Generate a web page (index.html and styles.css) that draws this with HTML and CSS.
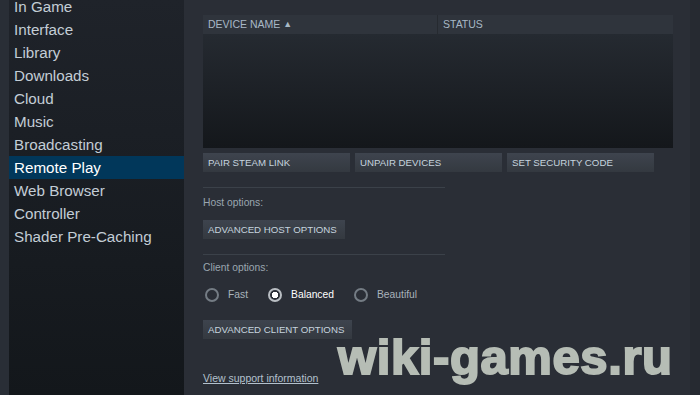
FILE: index.html
```html
<!DOCTYPE html>
<html lang="en">
<head>
  <meta charset="UTF-8" />
  <title>Settings - Remote Play</title>
  <link rel="stylesheet" href="styles.css">
</head>
<body>
  <div class="edge"></div>
  <ul class="sidebar">
    <li>In Game</li>
    <li>Interface</li>
    <li>Library</li>
    <li>Downloads</li>
    <li>Cloud</li>
    <li>Music</li>
    <li>Broadcasting</li>
    <li class="active">Remote Play</li>
    <li>Web Browser</li>
    <li>Controller</li>
    <li>Shader Pre-Caching</li>
  </ul>
  <div class="main">
    <div class="devices">
      <div class="devices-head">
        <div class="col col-name">Device name <span class="sort">&#9650;</span></div>
        <div class="col col-status">Status</div>
      </div>
      <div class="devices-body"></div>
    </div>
    <div class="button-row">
      <button class="btn btn-fixed">Pair Steam Link</button>
      <button class="btn btn-fixed">Unpair devices</button>
      <button class="btn btn-fixed">Set security code</button>
    </div>
    <div class="divider"></div>
    <div class="label">Host options:</div>
    <button class="btn btn-host">Advanced host options</button>
    <div class="divider divider-client"></div>
    <div class="label">Client options:</div>
    <div class="radios">
      <label class="radio"><span class="dot"></span>Fast</label>
      <label class="radio checked"><span class="dot"></span>Balanced</label>
      <label class="radio"><span class="dot"></span>Beautiful</label>
    </div>
    <button class="btn btn-client">Advanced client options</button>
    <a class="support" href="#">View support information</a>
    <div class="watermark">wiki-games.ru</div>
  </div>
  <div class="edge-right"></div>
</body>
</html>
```

FILE: styles.css
```css
body {
  margin: 0;
  height: 395px;
  overflow: hidden;
  display: flex;
  background: #2a2e36;
  font-family: 'Liberation Sans', Arial, sans-serif;
  color: #c6d4df;
}
.edge {
  width: 9px;
  background: #292e36;
}
.sidebar {
  width: 175px;
  margin: 0;
  padding: 0;
  list-style: none;
  background: linear-gradient(180deg, #1f232a, #13171b);
}
.sidebar li {
  height: 23px;
  line-height: 23px;
  padding-left: 5px;
  font-size: 15.2px;
  color: #c3cdd6;
}
.sidebar li:first-child {
  margin-top: -5px;
}
.sidebar li.active {
  background: #01375a;
  color: #fff;
}
.main {
  position: relative;
  flex: 1;
  padding: 15px 0 0 19px;
}
.devices {
  width: 470px;
}
.devices-head {
  display: flex;
  height: 19px;
  background: #2f343c;
}
.col {
  font-size: 10.5px;
  line-height: 19px;
  text-transform: uppercase;
  color: #a8b8c6;
}
.col-name {
  width: 229px;
  padding-left: 5px;
  border-right: 1px solid #262a30;
}
.col-status {
  padding-left: 5px;
}
.sort {
  font-size: 9px;
  vertical-align: 1px;
}
.devices-body {
  height: 114px;
  background: linear-gradient(180deg, #252a31, #14171b);
}
.button-row {
  display: flex;
  gap: 5px;
  margin-top: 5px;
}
.btn {
  display: block;
  height: 19px;
  padding: 0 8px 0 5px;
  border: none;
  background: linear-gradient(180deg, #3e444e, #343940);
  font-family: inherit;
  font-size: 9.7px;
  text-align: left;
  text-transform: uppercase;
  white-space: nowrap;
  color: #c6d4df;
  cursor: pointer;
}
.btn-fixed {
  width: 147px;
}
.btn-client {
  margin-top: 18px;
}
.btn-host {
  margin-top: 10px;
}
.divider {
  width: 242px;
  height: 1px;
  margin-top: 15px;
  background: #3b4149;
}
.label {
  margin-top: 8px;
  font-size: 10.3px;
  line-height: 14px;
  color: #9aa6b0;
}
.divider-client + .label {
  margin-top: 6px;
}
.radios {
  display: flex;
  margin-top: 13px;
  padding-left: 2px;
}
.radio {
  display: flex;
  align-items: center;
  margin-right: 20px;
  font-size: 10.3px;
  line-height: 14px;
  color: #a9b3bb;
}
.dot {
  box-sizing: border-box;
  width: 14px;
  height: 14px;
  margin-right: 9px;
  border: 2px solid #747c84;
  border-radius: 50%;
}
.radio.checked {
  color: #fff;
}
.radio.checked .dot {
  border-color: #b9bec3;
  background: radial-gradient(circle, #fff 0 3px, transparent 3.5px);
}
.support {
  display: inline-block;
  margin-top: 32px;
  font-size: 10.5px;
  line-height: 14px;
  color: #b3c1cd;
}
.watermark {
  position: absolute;
  left: 154px;
  top: 329px;
  font-family: 'Liberation Sans', Arial, sans-serif;
  font-size: 49px;
  font-weight: 700;
  line-height: 56px;
  letter-spacing: 0.6px;
  color: #b6bdb5;
  -webkit-text-stroke: 2px #b6bdb5;
}
.edge-right {
  width: 10px;
  background: #262a31;
}
```
